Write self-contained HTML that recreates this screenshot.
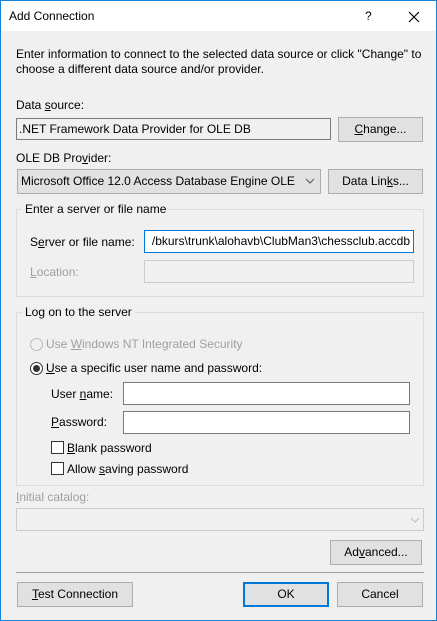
<!DOCTYPE html>
<html><head><style>
*{box-sizing:border-box;margin:0;padding:0}
body{width:437px;height:621px;overflow:hidden;font-family:"Liberation Sans",sans-serif;font-size:12px;color:#000;background:#f0f0f0}
.win{position:absolute;left:0;top:0;width:437px;height:621px;border:1px solid #1883d7;background:#f0f0f0}
.title{position:absolute;left:0;top:0;width:435px;height:30px;background:#fff}
.a{position:absolute;white-space:nowrap;line-height:15px}
.box{position:absolute;border:1px solid #7a7a7a;background:#fff}
.btn{position:absolute;border:1px solid #adadad;background:#e1e1e1;text-align:center;line-height:22px}
.grp{position:absolute;border:1px solid #dcdcdc}
.leg{position:absolute;background:#f0f0f0;padding:0 3px;line-height:15px}
.g{color:#a0a0a0}
u{text-decoration:underline}
.cb{position:absolute;width:13px;height:13px;border:1px solid #333;background:#fff}
.rd{position:absolute;width:13px;height:13px;border-radius:50%;border:1px solid #333;background:#fff}
</style></head><body>
<div class="win">
<div class="title"></div>
<div class="a" style="left:8px;top:8px;font-size:12px">Add Connection</div>
<div class="a" style="left:364px;top:8px">?</div>
<svg style="position:absolute;left:407px;top:10px" width="12" height="12"><path d="M1 1L11 11M11 1L1 11" stroke="#000" stroke-width="1.2"/></svg>

<div class="a" style="left:15px;top:46px">Enter information to connect to the selected data source or click "Change" to</div>
<div class="a" style="left:15px;top:61px">choose a different data source and/or provider.</div>

<div class="a" style="left:15px;top:97px">Data <u>s</u>ource:</div>
<div class="box" style="left:15px;top:117px;width:315px;height:22px;background:#f0f0f0"></div>
<div class="a" style="left:18px;top:121px">.NET Framework Data Provider for OLE DB</div>
<div class="btn" style="left:337px;top:116px;width:85px;height:25px"><u>C</u>hange...</div>

<div class="a" style="left:15px;top:150px">OLE DB Pro<u>v</u>ider:</div>
<div class="btn" style="left:16px;top:168px;width:304px;height:25px"></div>
<div class="a" style="left:20px;top:173px;width:278px;overflow:hidden">Microsoft Office 12.0 Access Database Engine OLE DB</div>
<svg style="position:absolute;left:304px;top:177px" width="10" height="6"><path d="M1 1L5 5L9 1" stroke="#555" fill="none"/></svg>
<div class="btn" style="left:327px;top:168px;width:95px;height:25px">Data Lin<u>k</u>s...</div>

<div class="grp" style="left:15px;top:208px;width:408px;height:88px"></div>
<div class="leg" style="left:21px;top:201px">Enter a server or file name</div>
<div class="a" style="left:29px;top:234px">S<u>e</u>rver or file name:</div>
<div class="box" style="left:143px;top:229px;width:270px;height:23px;border-color:#0078d7;overflow:hidden"><div class="a" style="right:3px;top:3px">/bkurs\trunk\alohavb\ClubMan3\chessclub.accdb</div></div>
<div class="a g" style="left:29px;top:264px"><u>L</u>ocation:</div>
<div class="box" style="left:143px;top:259px;width:270px;height:23px;border-color:#cccccc;background:#f0f0f0"></div>

<div class="grp" style="left:15px;top:311px;width:408px;height:174px"></div>
<div class="leg" style="left:21px;top:304px">Log on to the server</div>
<div class="rd" style="left:29px;top:337px;border-color:#bcbcbc;background:#f0f0f0"></div>
<div class="a g" style="left:45px;top:336px">Use <u>W</u>indows NT Integrated Security</div>
<div class="rd" style="left:29px;top:361px"><div style="position:absolute;left:2px;top:2px;width:7px;height:7px;border-radius:50%;background:#333"></div></div>
<div class="a" style="left:45px;top:360px"><u>U</u>se a specific user name and password:</div>
<div class="a" style="left:50px;top:386px">User <u>n</u>ame:</div>
<div class="box" style="left:122px;top:381px;width:287px;height:23px"></div>
<div class="a" style="left:50px;top:414px"><u>P</u>assword:</div>
<div class="box" style="left:122px;top:410px;width:287px;height:23px"></div>
<div class="cb" style="left:50px;top:440px"></div>
<div class="a" style="left:66px;top:440px"><u>B</u>lank password</div>
<div class="cb" style="left:50px;top:461px"></div>
<div class="a" style="left:66px;top:461px">Allow <u>s</u>aving password</div>

<div class="a g" style="left:15px;top:489px"><u>I</u>nitial catalog:</div>
<div class="box" style="left:15px;top:507px;width:408px;height:23px;border-color:#cccccc;background:#f0f0f0"></div>
<svg style="position:absolute;left:409px;top:516px" width="10" height="6"><path d="M1 1L5 5L9 1" stroke="#bbb" fill="none"/></svg>
<div class="btn" style="left:329px;top:539px;width:92px;height:25px">Ad<u>v</u>anced...</div>

<div style="position:absolute;left:15px;top:571px;width:408px;height:1px;background:#a0a0a0"></div>
<div class="btn" style="left:16px;top:581px;width:116px;height:25px"><u>T</u>est Connection</div>
<div class="btn" style="left:242px;top:581px;width:86px;height:25px;border:2px solid #0078d7;line-height:21px">OK</div>
<div class="btn" style="left:336px;top:581px;width:86px;height:25px">Cancel</div>
</div>
</body></html>
